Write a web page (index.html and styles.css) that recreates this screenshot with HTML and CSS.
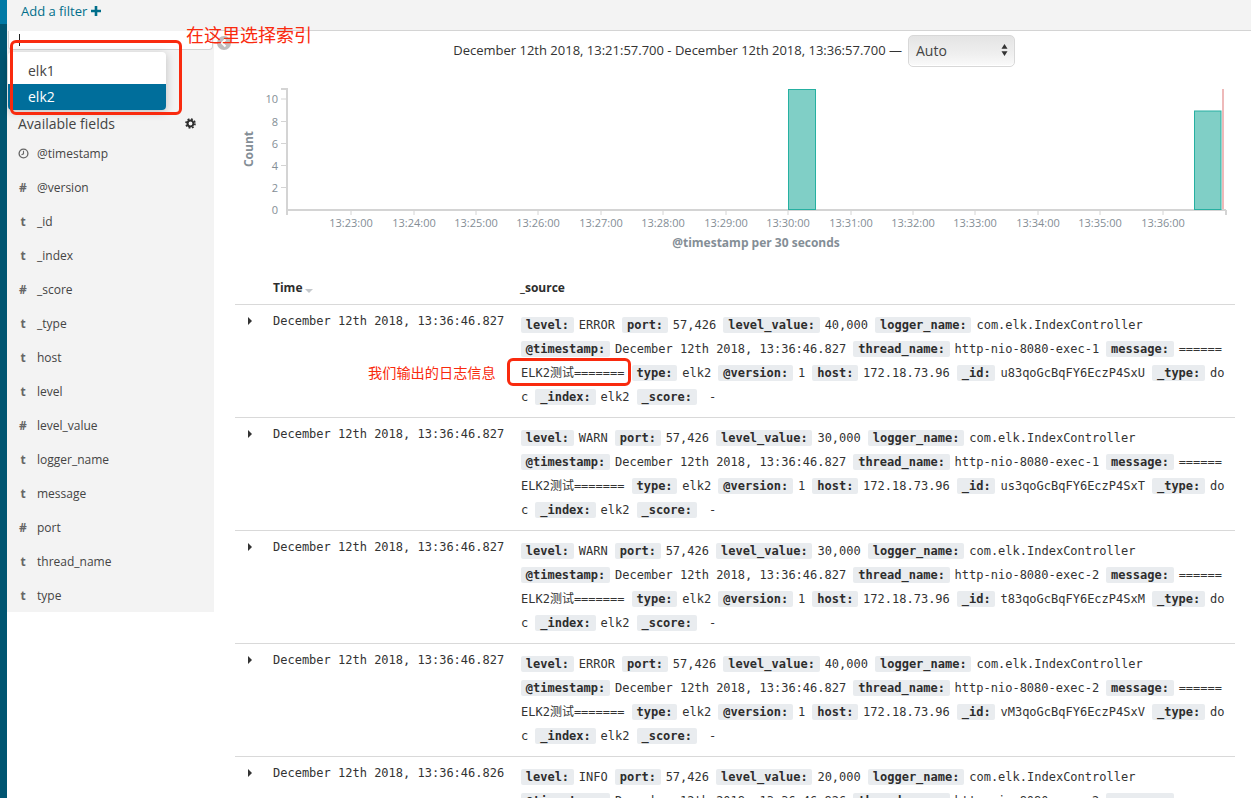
FILE: index.html
```html
<!DOCTYPE html>
<html lang="en">
<head>
    <meta charset="UTF-8">
    <meta name="viewport" content="width=device-width, initial-scale=1.0">
    <title>Discover - Kibana</title>
    <link rel="stylesheet" href="styles.css">
</head>
<body>
    <div class="nav-strip"><div class="nav-active"></div></div>

    <div class="app">
        <div class="filter-bar">
            <a class="add-filter">Add a filter <svg class="plus-icon" viewBox="0 0 10 10"><path d="M3.7 0h2.6v3.7H10v2.6H6.3V10H3.7V6.3H0V3.7h3.7z"/></svg></a>
        </div>

        <div class="content">
            <aside class="sidebar">
                <div class="index-input"><span class="cursor"></span></div>
                <div class="index-menu">
                    <div class="index-option">elk1</div>
                    <div class="index-option selected">elk2</div>
                </div>
                <div class="fields-title">
                    <span>Available fields</span>
                    <svg class="gear-icon" viewBox="0 0 12 12"><circle cx="6" cy="6" r="3.2" fill="none" stroke="#2d2d2d" stroke-width="2.2"/><circle cx="6" cy="6" r="4.9" fill="none" stroke="#2d2d2d" stroke-width="1.8" stroke-dasharray="2 1.85"/></svg>
                </div>
                <ul class="field-list">
                    <li><span class="field-type"><svg class="clock-icon" viewBox="0 0 10 10"><circle cx="5" cy="5" r="4" fill="none" stroke="#666" stroke-width="1.2"/><path d="M5 2.6V5.3L3.2 6.2" fill="none" stroke="#666" stroke-width="1"/></svg></span>@timestamp</li>
                    <li><span class="field-type">#</span>@version</li>
                    <li><span class="field-type">t</span>_id</li>
                    <li><span class="field-type">t</span>_index</li>
                    <li><span class="field-type">#</span>_score</li>
                    <li><span class="field-type">t</span>_type</li>
                    <li><span class="field-type">t</span>host</li>
                    <li><span class="field-type">t</span>level</li>
                    <li><span class="field-type">#</span>level_value</li>
                    <li><span class="field-type">t</span>logger_name</li>
                    <li><span class="field-type">t</span>message</li>
                    <li><span class="field-type">#</span>port</li>
                    <li><span class="field-type">t</span>thread_name</li>
                    <li><span class="field-type">t</span>type</li>
                </ul>
            </aside>

            <main class="main">
                <div class="time-range">
                    <span class="range-text">December 12th 2018, 13:21:57.700 - December 12th 2018, 13:36:57.700 —</span>
                    <div class="interval-select">
                        <span>Auto</span>
                        <svg class="select-arrows" viewBox="0 0 8 14"><path d="M4 0l3.5 5.5h-7zM4 14L.5 8.500h7z"/></svg>
                    </div>
                </div>

                <svg class="chart" viewBox="214 67 1037 203">
                    <g class="axis-line">
                        <path d="M287 88V215M286 210H1226M1226 210V215M281 89H287"/>
                    </g>
                    <g class="axis-tick">
                        <path d="M281 99H287M281 121.500H287M281 143.500H287M281 165.500H287M281 187.500H287"/>
                        <path d="M351 210v5M414 210v5M476 210v5M538 210v5M601 210v5M663 210v5M726 210v5M788 210v5M851 210v5M913 210v5M975 210v5M1038 210v5M1100 210v5M1163 210v5"/>
                    </g>
                    <rect class="bar" x="788.500" y="89.500" width="27" height="120"/>
                    <rect class="bar" x="1194.500" y="111" width="26.500" height="98.500"/>
                    <rect class="now-line" x="1222" y="89" width="2" height="120"/>
                    <g class="tick-text y-ticks">
                        <text x="278" y="103">10</text>
                        <text x="278" y="125.500">8</text>
                        <text x="278" y="147.500">6</text>
                        <text x="278" y="169.500">4</text>
                        <text x="278" y="191.500">2</text>
                        <text x="278" y="214">0</text>
                    </g>
                    <g class="tick-text x-ticks">
                        <text x="351" y="227">13:23:00</text>
                        <text x="414" y="227">13:24:00</text>
                        <text x="476" y="227">13:25:00</text>
                        <text x="538" y="227">13:26:00</text>
                        <text x="601" y="227">13:27:00</text>
                        <text x="663" y="227">13:28:00</text>
                        <text x="726" y="227">13:29:00</text>
                        <text x="788" y="227">13:30:00</text>
                        <text x="851" y="227">13:31:00</text>
                        <text x="913" y="227">13:32:00</text>
                        <text x="975" y="227">13:33:00</text>
                        <text x="1038" y="227">13:34:00</text>
                        <text x="1100" y="227">13:35:00</text>
                        <text x="1163" y="227">13:36:00</text>
                    </g>
                    <text class="axis-title" x="756" y="247">@timestamp per 30 seconds</text>
                    <text class="axis-title" transform="translate(253 149) rotate(-90)">Count</text>
                </svg>

                <div class="doc-table">
                    <div class="doc-head">
                        <div class="head-time">Time <span class="sort-caret"></span></div>
                        <div class="head-source">_source</div>
                    </div>

                    <div class="doc-row">
                        <div class="row-toggle"><span class="caret"></span></div>
                        <div class="row-time">December 12th 2018, 13:36:46.827</div>
                        <dl class="source">
                            <dt>level:</dt><dd>ERROR</dd>
                            <dt>port:</dt><dd>57,426</dd>
                            <dt>level_value:</dt><dd>40,000</dd>
                            <dt>logger_name:</dt><dd>com.elk.IndexController</dd>
                            <dt>@timestamp:</dt><dd>December 12th 2018, 13:36:46.827</dd>
                            <dt>thread_name:</dt><dd>http-nio-8080-exec-1</dd>
                            <dt>message:</dt><dd>======ELK2测试=======</dd>
                            <dt>type:</dt><dd>elk2</dd>
                            <dt>@version:</dt><dd>1</dd>
                            <dt>host:</dt><dd>172.18.73.96</dd>
                            <dt>_id:</dt><dd>u83qoGcBqFY6EczP4SxU</dd>
                            <dt>_type:</dt><dd>doc</dd>
                            <dt>_index:</dt><dd>elk2</dd>
                            <dt>_score:</dt><dd> -</dd>
                        </dl>
                    </div>

                    <div class="doc-row">
                        <div class="row-toggle"><span class="caret"></span></div>
                        <div class="row-time">December 12th 2018, 13:36:46.827</div>
                        <dl class="source">
                            <dt>level:</dt><dd>WARN</dd>
                            <dt>port:</dt><dd>57,426</dd>
                            <dt>level_value:</dt><dd>30,000</dd>
                            <dt>logger_name:</dt><dd>com.elk.IndexController</dd>
                            <dt>@timestamp:</dt><dd>December 12th 2018, 13:36:46.827</dd>
                            <dt>thread_name:</dt><dd>http-nio-8080-exec-1</dd>
                            <dt>message:</dt><dd>======ELK2测试=======</dd>
                            <dt>type:</dt><dd>elk2</dd>
                            <dt>@version:</dt><dd>1</dd>
                            <dt>host:</dt><dd>172.18.73.96</dd>
                            <dt>_id:</dt><dd>us3qoGcBqFY6EczP4SxT</dd>
                            <dt>_type:</dt><dd>doc</dd>
                            <dt>_index:</dt><dd>elk2</dd>
                            <dt>_score:</dt><dd> -</dd>
                        </dl>
                    </div>

                    <div class="doc-row">
                        <div class="row-toggle"><span class="caret"></span></div>
                        <div class="row-time">December 12th 2018, 13:36:46.827</div>
                        <dl class="source">
                            <dt>level:</dt><dd>WARN</dd>
                            <dt>port:</dt><dd>57,426</dd>
                            <dt>level_value:</dt><dd>30,000</dd>
                            <dt>logger_name:</dt><dd>com.elk.IndexController</dd>
                            <dt>@timestamp:</dt><dd>December 12th 2018, 13:36:46.827</dd>
                            <dt>thread_name:</dt><dd>http-nio-8080-exec-2</dd>
                            <dt>message:</dt><dd>======ELK2测试=======</dd>
                            <dt>type:</dt><dd>elk2</dd>
                            <dt>@version:</dt><dd>1</dd>
                            <dt>host:</dt><dd>172.18.73.96</dd>
                            <dt>_id:</dt><dd>t83qoGcBqFY6EczP4SxM</dd>
                            <dt>_type:</dt><dd>doc</dd>
                            <dt>_index:</dt><dd>elk2</dd>
                            <dt>_score:</dt><dd> -</dd>
                        </dl>
                    </div>

                    <div class="doc-row">
                        <div class="row-toggle"><span class="caret"></span></div>
                        <div class="row-time">December 12th 2018, 13:36:46.827</div>
                        <dl class="source">
                            <dt>level:</dt><dd>ERROR</dd>
                            <dt>port:</dt><dd>57,426</dd>
                            <dt>level_value:</dt><dd>40,000</dd>
                            <dt>logger_name:</dt><dd>com.elk.IndexController</dd>
                            <dt>@timestamp:</dt><dd>December 12th 2018, 13:36:46.827</dd>
                            <dt>thread_name:</dt><dd>http-nio-8080-exec-2</dd>
                            <dt>message:</dt><dd>======ELK2测试=======</dd>
                            <dt>type:</dt><dd>elk2</dd>
                            <dt>@version:</dt><dd>1</dd>
                            <dt>host:</dt><dd>172.18.73.96</dd>
                            <dt>_id:</dt><dd>vM3qoGcBqFY6EczP4SxV</dd>
                            <dt>_type:</dt><dd>doc</dd>
                            <dt>_index:</dt><dd>elk2</dd>
                            <dt>_score:</dt><dd> -</dd>
                        </dl>
                    </div>

                    <div class="doc-row">
                        <div class="row-toggle"><span class="caret"></span></div>
                        <div class="row-time">December 12th 2018, 13:36:46.826</div>
                        <dl class="source">
                            <dt>level:</dt><dd>INFO</dd>
                            <dt>port:</dt><dd>57,426</dd>
                            <dt>level_value:</dt><dd>20,000</dd>
                            <dt>logger_name:</dt><dd>com.elk.IndexController</dd>
                            <dt>@timestamp:</dt><dd>December 12th 2018, 13:36:46.826</dd>
                            <dt>thread_name:</dt><dd>http-nio-8080-exec-2</dd>
                            <dt>message:</dt><dd>======ELK2测试=======</dd>
                        </dl>
                    </div>
                </div>
            </main>
        </div>
    </div>

    <!-- collapse handle and red notes drawn over the screenshot -->
    <svg class="collapse-handle" viewBox="0 0 14 14"><circle cx="7" cy="7" r="7" fill="#bfbfbf"/><path d="M8.500 3.500L5 7l3.500 3.500" fill="none" stroke="#fff" stroke-width="2"/></svg>
    <div class="note-box note-box-index"></div>
    <div class="note note-index">在这里选择索引</div>
    <div class="note-box note-box-log"></div>
    <div class="note note-log">我们输出的日志信息</div>
</body>
</html>
```

FILE: styles.css
```css
html, body {
    height: 100%;
}
body {
    margin: 0;
    display: flex;
    overflow: hidden;
    position: relative;
    background-color: #fff;
    color: #2d2d2d;
    font-family: "Open Sans", "Noto Sans CJK SC", sans-serif;
    font-size: 12px;
}
.nav-strip {
    width: 7px;
    flex-shrink: 0;
    background-color: #005571;
}
.nav-active {
    height: 24px;
    background-color: #0079a5;
}
.app {
    flex: 1;
    min-width: 0;
    display: flex;
    flex-direction: column;
}
.filter-bar {
    height: 30px;
    flex-shrink: 0;
    padding-left: 14px;
    background-color: #f3f3f3;
    border-bottom: 1px solid #d4d4d4;
}
.add-filter {
    display: inline-flex;
    align-items: center;
    gap: 4px;
    height: 22px;
    color: #006e8a;
    font-size: 13px;
}
.plus-icon {
    width: 10px;
    height: 10px;
    fill: #006e8a;
}
.content {
    flex: 1;
    min-height: 0;
    display: flex;
    align-items: flex-start;
}

/* left column */
.sidebar {
    width: 207px;
    flex-shrink: 0;
    position: relative;
    margin-top: -1px;
    background-color: #f3f3f3;
}
.index-input {
    height: 19px;
    margin: 1px 1px 0 1px;
    padding: 3px 0 0 10px;
    box-sizing: border-box;
    background-color: #fff;
    border: 1px solid #d4d4d4;
    border-top: none;
    border-radius: 0 0 4px 4px;
}
.cursor {
    display: block;
    width: 1px;
    height: 12px;
    background-color: #222;
}
.index-menu {
    position: absolute;
    top: 22px;
    left: 1px;
    width: 158px;
    background-color: #fff;
    border-radius: 4px;
    box-shadow: 0 2px 10px rgba(0, 0, 0, 0.22);
    overflow: hidden;
}
.index-option {
    padding-left: 20px;
    font-size: 14px;
    line-height: 26px;
    color: #444;
}
.index-option:first-child {
    padding-top: 6px;
}
.index-option.selected {
    background-color: #006e9b;
    color: #fff;
}
.fields-title {
    display: flex;
    justify-content: space-between;
    align-items: center;
    height: 20px;
    margin-top: 63px;
    padding: 0 18px 0 11px;
    font-size: 14px;
    color: #444;
}
.gear-icon {
    width: 11px;
    height: 11px;
}
.field-list {
    list-style: none;
    margin: 0;
    padding: 3px 0 0 0;
}
.field-list li {
    display: flex;
    align-items: center;
    height: 34px;
    color: #444;
}
.field-type {
    width: 12px;
    margin: 0 8px 0 10px;
    text-align: center;
    font-weight: 700;
    color: #666;
}
.clock-icon {
    width: 11px;
    height: 11px;
    vertical-align: -1px;
}

/* right column */
.main {
    flex: 1;
    min-width: 0;
}
.time-range {
    display: flex;
    justify-content: flex-end;
    align-items: center;
    gap: 6px;
    height: 32px;
    margin-top: 4px;
    padding-right: 236px;
    font-size: 13px;
    color: #333;
}
.range-text {
    padding-bottom: 2px;
}
.interval-select {
    width: 107px;
    height: 32px;
    display: flex;
    justify-content: space-between;
    align-items: center;
    padding: 0 6px 2px 7px;
    box-sizing: border-box;
    border: 1px solid #d8d8d8;
    border-radius: 5px;
    background: linear-gradient(#e4e4e4, #efefef 60%, #fafafa);
    box-shadow: inset 0 -1px 1px #fff;
    font-size: 14px;
    color: #444;
}
.select-arrows {
    width: 7px;
    height: 12px;
    fill: #333;
}
.chart {
    display: block;
    width: 1037px;
    height: 203px;
}
.axis-line path {
    fill: none;
    stroke: #d4d4d4;
    stroke-width: 2;
}
.axis-tick path {
    fill: none;
    stroke: #d4d4d4;
    stroke-width: 1;
}
.bar {
    fill: #80cfc6;
    stroke: #26b0a1;
    stroke-width: 1;
}
.now-line {
    fill: #eeb9b9;
}
.tick-text text {
    fill: #848e96;
    font-size: 11px;
}
.y-ticks text {
    text-anchor: end;
}
.x-ticks text {
    text-anchor: middle;
}
.axis-title {
    fill: #848e96;
    font-size: 12px;
    font-weight: 700;
    text-anchor: middle;
}

/* documents */
.doc-table {
    margin: 0 16px 0 21px;
}
.doc-head {
    display: flex;
    height: 34px;
    align-items: center;
    font-weight: 700;
    color: #2d2d2d;
}
.head-time {
    width: 247px;
    margin-left: 38px;
}
.sort-caret {
    display: inline-block;
    width: 0;
    height: 0;
    margin-left: -1px;
    vertical-align: -1px;
    border-left: 4px solid transparent;
    border-right: 4px solid transparent;
    border-top: 4px solid #c4c8cc;
}
.doc-row {
    display: flex;
    border-top: 1px solid #d9d9d9;
    padding: 8px 0;
    font-family: "DejaVu Sans Mono", "Noto Sans CJK SC", monospace;
    font-size: 12px;
}
.row-toggle {
    width: 38px;
    flex-shrink: 0;
    padding-left: 13px;
    box-sizing: border-box;
}
.caret {
    display: block;
    width: 0;
    height: 0;
    margin-top: 4px;
    border-top: 4px solid transparent;
    border-bottom: 4px solid transparent;
    border-left: 4px solid #333;
}
.row-time {
    width: 248px;
    flex-shrink: 0;
    line-height: 16px;
    color: #333;
}
.source {
    width: 706px;
    margin: 0;
    line-height: 24px;
    word-break: break-all;
    color: #333;
}
.source dt,
.source dd {
    display: inline;
    margin: 0;
}
.source dt {
    padding: 1px 4.75px;
    margin-right: 5px;
    font-weight: 700;
    white-space: nowrap;
    color: #2d2d2d;
    background-color: #e9ecef;
    border-radius: 2px;
}

/* overlays */
.collapse-handle {
    position: absolute;
    top: 36px;
    left: 217px;
    width: 14px;
    height: 14px;
}
.note-box {
    position: absolute;
    box-sizing: border-box;
    border: 3px solid #f92a0e;
    border-radius: 6px;
}
.note-box-index {
    top: 40px;
    left: 10px;
    width: 172px;
    height: 75px;
}
.note-box-log {
    top: 358px;
    left: 507px;
    width: 124px;
    height: 28px;
}
.note {
    position: absolute;
    color: #f92a0e;
    font-family: "Noto Sans CJK SC", sans-serif;
    white-space: nowrap;
}
.note-index {
    top: 21px;
    left: 186px;
    font-size: 18px;
    line-height: 26px;
}
.note-log {
    top: 362px;
    left: 368px;
    font-size: 14.2px;
    line-height: 20px;
}
```
